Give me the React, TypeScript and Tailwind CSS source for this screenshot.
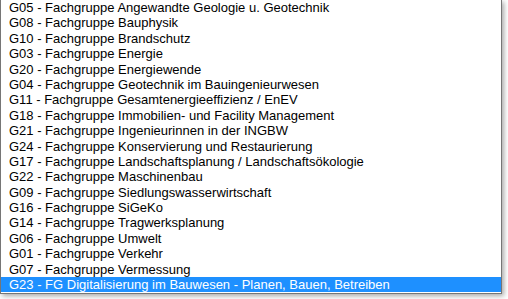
const groups = [
  'G05 - Fachgruppe Angewandte Geologie u. Geotechnik',
  'G08 - Fachgruppe Bauphysik',
  'G10 - Fachgruppe Brandschutz',
  'G03 - Fachgruppe Energie',
  'G20 - Fachgruppe Energiewende',
  'G04 - Fachgruppe Geotechnik im Bauingenieurwesen',
  'G11 - Fachgruppe Gesamtenergieeffizienz / EnEV',
  'G18 - Fachgruppe Immobilien- und Facility Management',
  'G21 - Fachgruppe Ingenieurinnen in der INGBW',
  'G24 - Fachgruppe Konservierung und Restaurierung',
  'G17 - Fachgruppe Landschaftsplanung / Landschaftsökologie',
  'G22 - Fachgruppe Maschinenbau',
  'G09 - Fachgruppe Siedlungswasserwirtschaft',
  'G16 - Fachgruppe SiGeKo',
  'G14 - Fachgruppe Tragwerksplanung',
  'G06 - Fachgruppe Umwelt',
  'G01 - Fachgruppe Verkehr',
  'G07 - Fachgruppe Vermessung',
  'G23 - FG Digitalisierung im Bauwesen - Planen, Bauen, Betreiben',
];

const selected = 'G23 - FG Digitalisierung im Bauwesen - Planen, Bauen, Betreiben';

export default function App() {
  return (
    <div className="w-[508px] h-[299px] bg-white overflow-hidden">
      <div
        className="w-[502px] border-x border-b border-t-0 border-[#767676] bg-white pb-px shadow-[2px_2px_5px_rgba(0,0,0,0.35)]"
        style={{ fontFamily: '"Liberation Sans", Arial, sans-serif' }}
      >
        {groups.map((g) => (
          <div
            key={g}
            className={
              g === selected
                ? 'h-[15.4px] leading-[15.4px] pl-2 text-[13px] whitespace-nowrap bg-[#1e90ff] text-white'
                : 'h-[15.4px] leading-[15.4px] pl-2 text-[13px] whitespace-nowrap text-black'
            }
          >
            {g}
          </div>
        ))}
      </div>
    </div>
  );
}
